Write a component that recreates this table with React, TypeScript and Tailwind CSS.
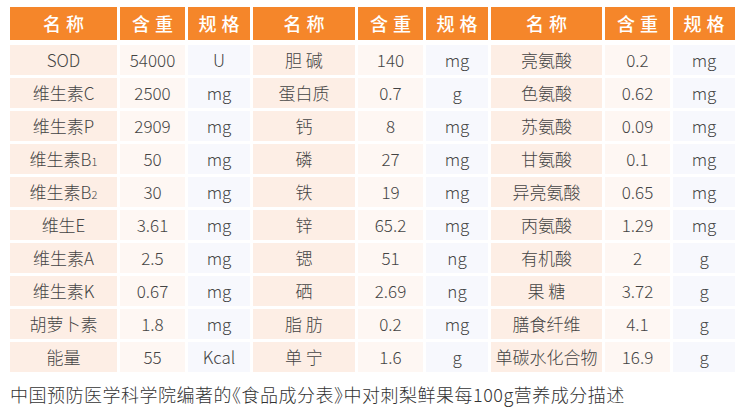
const cols = "grid grid-cols-[107px_65px_62px_102px_65px_62px_111px_65px_62px] gap-x-[3px]";

type Cell = React.ReactNode;

const rows: Cell[][] = [
	["SOD", "54000", "U", "胆 碱", "140", "mg", "亮氨酸", "0.2", "mg"],
	["维生素C", "2500", "mg", "蛋白质", "0.7", "g", "色氨酸", "0.62", "mg"],
	["维生素P", "2909", "mg", "钙", "8", "mg", "苏氨酸", "0.09", "mg"],
	[<span>维生素B<span className="text-[11px]">1</span></span>, "50", "mg", "磷", "27", "mg", "甘氨酸", "0.1", "mg"],
	[<span>维生素B<span className="text-[11px]">2</span></span>, "30", "mg", "铁", "19", "mg", "异亮氨酸", "0.65", "mg"],
	["维生E", "3.61", "mg", "锌", "65.2", "mg", "丙氨酸", "1.29", "mg"],
	["维生素A", "2.5", "mg", "锶", "51", "ng", "有机酸", "2", "g"],
	["维生素K", "0.67", "mg", "硒", "2.69", "ng", "果 糖", "3.72", "g"],
	["胡萝卜素", "1.8", "mg", "脂 肪", "0.2", "mg", "膳食纤维", "4.1", "g"],
	["能量", "55", "Kcal", "单 宁", "1.6", "g", "单碳水化合物", "16.9", "g"],
];

const bg = ["bg-[#fdeee5]", "bg-[#fef7f3]", "bg-[#f7f8fd]"];

export default function App() {
	return (
		<div className="w-[741px] h-[415px] bg-white pt-[7px] pl-[10px] font-['Noto_Sans_CJK_SC',sans-serif]">
			<div className={cols}>
				{["名称", "含重", "规格", "名称", "含重", "规格", "名称", "含重", "规格"].map((h, i) => (
					<div key={i}
						className="h-[33px] bg-[#f5862a] text-white text-[18px] font-medium tracking-[5px] pl-[5px] flex items-center justify-center">
						{h}
					</div>
				))}
			</div>
			<div className="flex flex-col gap-y-[3px] mt-[5px]">
				{rows.map((row, r) => (
					<div key={r} className={cols}>
						{row.map((c, i) => (
							<div key={i}
								className={`h-[30px] ${bg[i % 3]} text-[17px] font-light text-[#444] flex items-center justify-center whitespace-nowrap`}>
								{c}
							</div>
						))}
					</div>
				))}
			</div>
			<p className="mt-[10px] text-[18px] font-light text-[#333] leading-[24px] tracking-[0.5px]">
				中国预防医学科学院编著的<span className="[font-feature-settings:'halt']">《</span>食品成分表<span className="[font-feature-settings:'halt']">》</span>中对刺梨鲜果每100g营养成分描述
			</p>
		</div>
	);
}
